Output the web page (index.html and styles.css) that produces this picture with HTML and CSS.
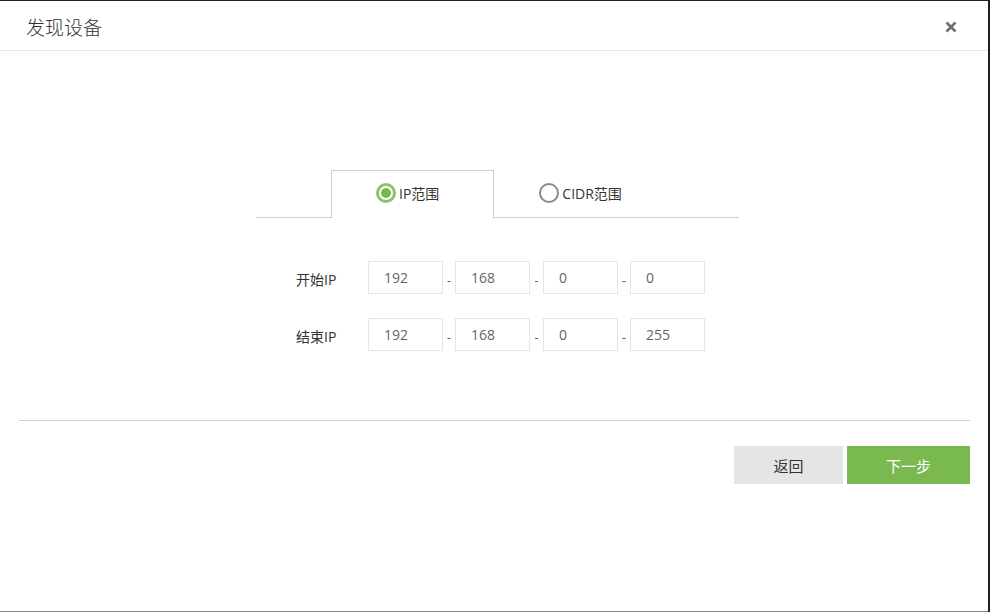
FILE: index.html
```html
<!DOCTYPE html>
<html lang="zh">
<head>
<meta charset="utf-8">
<title>发现设备</title>
<link rel="stylesheet" href="styles.css">
</head>
<body>
<div class="modal">
  <div class="modal-header">
    <h1 class="modal-title">发现设备</h1>
    <button class="close" aria-label="关闭">
      <svg width="12" height="12" viewBox="0 0 12 12"><path d="M1.5 1.5 L10.5 10.5 M10.5 1.5 L1.5 10.5" stroke="#6e6e6e" stroke-width="2.6" stroke-linecap="butt"/></svg>
    </button>
  </div>
  <div class="modal-body">
    <div class="tabs">
      <div class="tab active"><span class="radio checked"></span>IP范围</div>
      <div class="tab"><span class="radio"></span>CIDR范围</div>
    </div>
    <div class="form">
      <div class="row">
        <label class="label">开始IP</label>
        <div class="ip">
          <input class="seg" value="192"><span class="dash">-</span>
          <input class="seg" value="168"><span class="dash wide">-</span>
          <input class="seg" value="0"><span class="dash">-</span>
          <input class="seg" value="0">
        </div>
      </div>
      <div class="row">
        <label class="label">结束IP</label>
        <div class="ip">
          <input class="seg" value="192"><span class="dash">-</span>
          <input class="seg" value="168"><span class="dash wide">-</span>
          <input class="seg" value="0"><span class="dash">-</span>
          <input class="seg" value="255">
        </div>
      </div>
    </div>
  </div>
  <div class="modal-footer">
    <button class="btn btn-back">返回</button>
    <button class="btn btn-next">下一步</button>
  </div>
</div>
</body>
</html>
```
FILE: styles.css
```css
html, body {
  margin: 0;
  padding: 0;
}
body {
  background: #1f1f1f;
  width: 990px;
  height: 612px;
  overflow: hidden;
  font-family: "Open Sans", "Noto Sans CJK SC", sans-serif;
  color: #333;
}
.modal {
  margin-top: 1px;
  width: 988px;
  height: 610px;
  background: #fff;
  border-bottom: 1px solid #858585;
  display: flex;
  flex-direction: column;
}
.modal-header {
  height: 49px;
  border-bottom: 1px solid #e6e6e6;
  display: flex;
  align-items: center;
  justify-content: space-between;
  padding: 0 31px 0 26px;
}
.modal-title {
  margin: 0;
  font-family: "Noto Sans CJK SC", sans-serif;
  font-weight: 300;
  font-size: 19px;
  color: #333;
  line-height: 1;
  padding-top: 2px;
}
.close {
  border: 0;
  background: none;
  padding: 0;
  width: 12px;
  height: 12px;
  display: flex;
  margin-top: 3px;
}
.modal-body {
  padding-top: 119px;
}
.tabs {
  margin-left: 256px;
  width: 408px;
  height: 47px;
  border-bottom: 1px solid #cfcfcf;
  display: flex;
  padding-left: 75px;
}
.tab {
  height: 48px;
  padding: 0 54px 3px 44px;
  display: flex;
  align-items: center;
  font-size: 14px;
  color: #333;
  box-sizing: border-box;
  border: 1px solid transparent;
  border-bottom: 0;
  margin-bottom: -1px;
}
.tab.active {
  border-color: #cfcfcf;
  background: #fff;
}
.radio {
  width: 20px;
  height: 20px;
  border-radius: 50%;
  border: 2px solid #8a8a8a;
  box-sizing: border-box;
  margin-right: 3px;
  position: relative;
  flex: none;
}
.radio.checked {
  border: 3px solid #8cc46a;
}
.radio.checked::after {
  content: "";
  position: absolute;
  left: 2px;
  top: 2px;
  width: 10px;
  height: 10px;
  border-radius: 50%;
  background: #79b84d;
}
.form {
  margin-top: 43px;
  padding-left: 296px;
  display: flex;
  flex-direction: column;
  gap: 24px;
}
.row {
  display: flex;
  align-items: center;
  height: 33px;
}
.label {
  width: 72px;
  font-size: 14px;
  color: #333;
  padding-top: 3px;
}
.ip {
  display: flex;
  align-items: center;
}
.seg {
  width: 75px;
  height: 33px;
  box-sizing: border-box;
  border: 1px solid #e3e6e6;
  padding: 0 0 0 15px;
  font-family: "Open Sans", sans-serif;
  font-size: 14px;
  color: #666;
  outline: none;
  background: #fff;
}
.dash {
  width: 12px;
  text-align: center;
  font-size: 12px;
  color: #555;
  padding-top: 6px;
}
.dash.wide {
  width: 13px;
}
.modal-footer {
  margin: 69px 18px 0 19px;
  border-top: 1px solid #cfcfcf;
  padding-top: 25px;
  display: flex;
  justify-content: flex-end;
  gap: 4px;
}
.btn {
  border: 0;
  height: 38px;
  font-family: "Noto Sans CJK SC", sans-serif;
  font-size: 15px;
  cursor: pointer;
}
.btn-back {
  width: 109px;
  background: #e4e6e6;
  color: #333;
}
.btn-next {
  width: 123px;
  background: #7ab850;
  color: #fff;
}
```
